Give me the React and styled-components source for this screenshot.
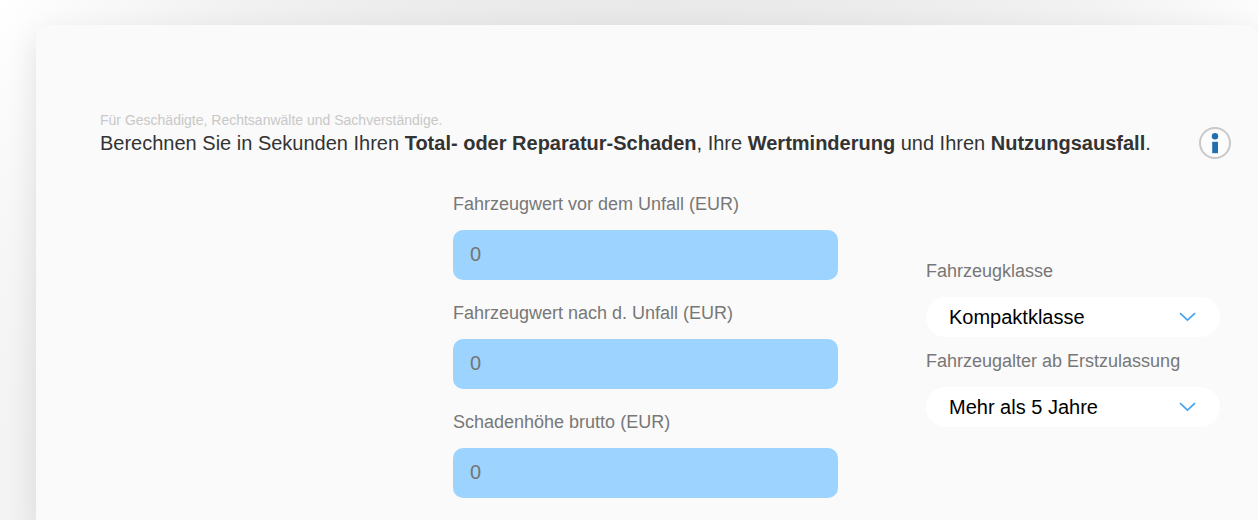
import React from "react";
import styled, { createGlobalStyle } from "styled-components";

const GlobalStyle = createGlobalStyle`
  *, *::before, *::after { box-sizing: border-box; }
  body {
    margin: 0;
    font-family: "Liberation Sans", Arial, sans-serif;
    color: #333;
  }
`;

const Page = styled.div`
  display: flex;
  min-height: 100vh;
  padding: 25px 0 0 36px;
  background: radial-gradient(ellipse 64% 170% at 52% 100%, #e4e4e4 45%, #f2f2f2 79%, #fff 100%);
`;

const Card = styled.main`
  flex: 1;
  min-width: 0;
  padding: 86px 27px 23px 64px;
  background: #fafafa;
  border-radius: 12px 12px 0 0;
  box-shadow: 0 10px 30px rgba(0, 0, 0, 0.1);
`;

const Header = styled.header`
  display: flex;
  align-items: flex-end;
  justify-content: space-between;
  gap: 24px;
`;

const Audience = styled.p`
  margin: 0;
  font-size: 14px;
  line-height: 18px;
  color: #c8c8c8;
`;

const Headline = styled.h1`
  margin: 0;
  padding-bottom: 2px;
  font-size: 20px;
  line-height: 28px;
  font-weight: 400;
`;

const InfoButton = styled.button`
  flex: none;
  width: 32px;
  height: 32px;
  padding: 0;
  border: 0;
  background: none;
  cursor: pointer;

  svg { display: block; }
`;

const Form = styled.form`
  display: flex;
  justify-content: flex-end;
  align-items: center;
  gap: 88px;
  padding: 33px 11px 0 0;
`;

const Amounts = styled.div`
  display: grid;
  gap: 21px;
  flex: 0 1 385px;
  min-width: 0;
`;

const Choices = styled.div`
  display: grid;
  gap: 12px;
  flex: 0 1 294px;
  min-width: 0;
  padding-bottom: 5px;
`;

const Field = styled.div`
  display: grid;
  gap: 14px;
`;

const Label = styled.label`
  font-size: 18px;
  line-height: 24px;
  color: #777;
`;

const AmountInput = styled.input`
  width: 100%;
  height: 50px;
  padding: 0 17px 2px;
  border: 0;
  border-radius: 10px;
  background: #9dd3ff;
  font: inherit;
  font-size: 20px;
  color: #333;

  &::placeholder { color: #757575; opacity: 1; }
`;

const SelectBox = styled.div`
  display: grid;
  align-items: center;

  > * { grid-area: 1 / 1; }

  svg {
    justify-self: end;
    margin-right: 24px;
    pointer-events: none;
  }
`;

const Select = styled.select`
  appearance: none;
  width: 100%;
  height: 40px;
  padding: 0 48px 0 23px;
  border: 0;
  border-radius: 20px;
  background: #fff;
  font: inherit;
  font-size: 20px;
  color: #000;
`;

function AmountField({ id, label }) {
  return (
    <Field>
      <Label htmlFor={id}>{label}</Label>
      <AmountInput id={id} type="text" inputMode="decimal" placeholder="0" />
    </Field>
  );
}

function SelectField({ id, label, value }) {
  return (
    <Field>
      <Label htmlFor={id}>{label}</Label>
      <SelectBox>
        <Select id={id} defaultValue={value}>
          <option>{value}</option>
        </Select>
        <svg width="17" height="10" viewBox="0 0 17 10" fill="none" aria-hidden="true">
          <path d="M1 1.2 8.5 8.2 16 1.2" stroke="#42a1f0" strokeWidth="1.6" />
        </svg>
      </SelectBox>
    </Field>
  );
}

export default function App() {
  return (
    <>
      <GlobalStyle />
      <Page>
        <Card>
          <Header>
            <div>
              <Audience>Für Geschädigte, Rechtsanwälte und Sachverständige.</Audience>
              <Headline>
                Berechnen Sie in Sekunden Ihren <b>Total- oder Reparatur-Schaden</b>, Ihre{" "}
                <b>Wertminderung</b> und Ihren <b>Nutzungsausfall</b>.
              </Headline>
            </div>
            <InfoButton type="button" aria-label="Info">
              <svg width="32" height="32" viewBox="0 0 32 32" aria-hidden="true">
                <circle cx="16" cy="16" r="15" fill="#fcfcfc" stroke="#c8c8c8" strokeWidth="2" />
                <circle cx="16" cy="9.2" r="3.2" fill="#226fae" />
                <rect x="13.2" y="14.8" width="5.8" height="11.4" fill="#226fae" />
              </svg>
            </InfoButton>
          </Header>
          <Form>
            <Amounts>
              <AmountField id="value-before" label="Fahrzeugwert vor dem Unfall (EUR)" />
              <AmountField id="value-after" label="Fahrzeugwert nach d. Unfall (EUR)" />
              <AmountField id="damage" label="Schadenhöhe brutto (EUR)" />
            </Amounts>
            <Choices>
              <SelectField id="vehicle-class" label="Fahrzeugklasse" value="Kompaktklasse" />
              <SelectField id="vehicle-age" label="Fahrzeugalter ab Erstzulassung" value="Mehr als 5 Jahre" />
            </Choices>
          </Form>
        </Card>
      </Page>
    </>
  );
}
